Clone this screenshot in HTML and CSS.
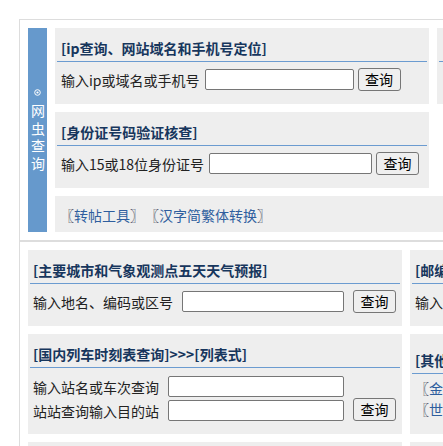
FILE: index.html
```html
<!DOCTYPE html>
<html lang="zh-CN">
<head>
<meta charset="utf-8">
<title>网虫查询</title>
<link rel="stylesheet" href="styles.css">
</head>
<body>
<div class="wrap">
  <section class="box box-top">
    <aside class="side">
      <svg class="ico" width="7" height="7" viewBox="0 0 7 7"><circle cx="3.5" cy="3.5" r="2.8" fill="none" stroke="#fff" stroke-width="1"/><circle cx="3.5" cy="3.5" r="1.1" fill="#fff"/></svg>
      <span class="side-txt">网虫查询</span>
    </aside>
    <div class="grid grid-top">
      <div class="panel">
        <h3 class="ttl">[ip查询、网站域名和手机号定位]</h3>
        <div class="row row-top">
          <label class="lbl">输入ip或域名或手机号</label>
          <input class="inp inp-a" type="text">
          <button class="btn btn-a" type="button">查询</button>
        </div>
      </div>
      <div class="panel">
        <h3 class="ttl ttl-off">[常用网址查询]</h3>
      </div>
      <div class="panel panel-r2">
        <h3 class="ttl">[身份证号码验证核查]</h3>
        <div class="row row-top">
          <label class="lbl">输入15或18位身份证号</label>
          <input class="inp inp-b" type="text">
          <button class="btn btn-a" type="button">查询</button>
        </div>
      </div>
      <div class="panel panel-links">
        <span class="br">〖</span><a class="lnk" href="#">转帖工具</a><span class="br">〗</span><span class="br br-gap">〖</span><a class="lnk" href="#">汉字简繁体转换</a><span class="br">〗</span>
      </div>
    </div>
  </section>
  <section class="box box-bot">
    <div class="grid grid-bot">
      <div class="panel">
        <h3 class="ttl ttl-b">[主要城市和气象观测点五天天气预报]</h3>
        <div class="row row-bot">
          <label class="lbl">输入地名、编码或区号</label>
          <input class="inp inp-c" type="text">
          <button class="btn btn-b" type="button">查询</button>
        </div>
      </div>
      <div class="panel">
        <h3 class="ttl ttl-b">[邮编区号查询]</h3>
        <div class="row row-bot">
          <label class="lbl">输入地名或邮编</label>
        </div>
      </div>
      <div class="panel">
        <h3 class="ttl ttl-b">[国内列车时刻表查询]&gt;&gt;&gt;[列表式]</h3>
        <div class="train">
          <div class="fields">
            <div class="frow"><label class="lbl">输入站名或车次查询</label><input class="inp inp-d" type="text"></div>
            <div class="frow"><label class="lbl">站站查询输入目的站</label><input class="inp inp-d" type="text"></div>
          </div>
          <button class="btn btn-b" type="button">查询</button>
        </div>
      </div>
      <div class="panel panel-other">
        <h3 class="ttl ttl-b">[其他实用查询]</h3>
        <div class="other-links">
          <div class="ol"><span class="br">〖</span><a class="lnk" href="#">金价行情</a><span class="br">〗</span></div>
          <div class="ol"><span class="br">〖</span><a class="lnk" href="#">世界时间</a><span class="br">〗</span></div>
        </div>
      </div>
      <div class="panel"></div>
      <div class="panel"></div>
    </div>
  </section>
</div>
</body>
</html>
```
FILE: styles.css
```css
html, body {
  margin: 0;
  padding: 0;
  overflow: hidden;
  background: #fff;
}
body {
  font-family: "Noto Sans CJK SC", "Noto Sans", sans-serif;
  font-size: 14px;
  color: #222;
}
.wrap {
  margin: 19px 0 0 19px;
  width: 820px;
}
.box {
  border: 1px solid #dddddd;
  padding: 8px;
}
.box-top {
  display: flex;
  gap: 8px;
}
.side {
  width: 19px;
  flex: none;
  background: #6699cc;
  color: #fff;
  display: flex;
  flex-direction: column;
  justify-content: center;
  align-items: center;
  font-size: 14px;
}
.ico {
  display: block;
  margin: 0 0 8px;
}
.side-txt {
  display: block;
  writing-mode: vertical-rl;
  text-orientation: upright;
  letter-spacing: 3.5px;
  line-height: 19px;
  margin-bottom: -3px;
}
.grid {
  display: grid;
  grid-template-columns: 374px 374px;
  gap: 8px;
}
.grid-top {
  grid-template-rows: 76px 76px 36px;
}
.grid-bot {
  grid-template-rows: 76px 100px 76px;
}
.panel {
  background: #eeeeee;
}
.panel-r2 {
  grid-column: 1;
}
.panel-links {
  grid-column: 1 / span 2;
  padding: 3px 0 0 5px;
  line-height: 33px;
  font-size: 14px;
}
.ttl {
  margin: 0 2px;
  padding: 8px 4px 0;
  line-height: 25px;
  font-size: 14px;
  font-weight: bold;
  color: #17365d;
  border-bottom: 1px solid #6b9bd0;
  white-space: nowrap;
}
.ttl-b {
  padding-left: 3px;
}
.row {
  display: flex;
  align-items: center;
  height: 23px;
  padding-top: 6px;
  white-space: nowrap;
}
.row-top {
  padding-left: 6px;
}
.row-bot {
  padding-left: 5px;
}
.lbl {
  color: #222;
  font-size: 14px;
}
.inp {
  box-sizing: border-box;
  height: 21px;
  border: 1px solid #767676;
  border-radius: 2px;
  background: #fff;
  padding: 0 2px;
  margin: 0;
}
.inp-a { width: 149px; margin-left: 5px; }
.inp-b { width: 163px; margin-left: 5px; }
.inp-c { width: 162px; margin-left: 9px; }
.inp-d { width: 176px; margin-left: 9px; }
.btn {
  box-sizing: border-box;
  width: 43px;
  height: 23px;
  padding: 0;
  margin: 0;
  border: 1px solid #767676;
  border-radius: 3px;
  background: #efefef;
  color: #000;
  font-family: "Noto Sans CJK SC", sans-serif;
  font-size: 14px;
  line-height: 21px;
}
.btn-a { margin-left: 4px; }
.btn-b { margin-left: 9px; }
.train {
  display: flex;
  align-items: flex-end;
  padding: 8px 0 0 5px;
}
.fields {
  display: flex;
  flex-direction: column;
  gap: 3px;
}
.frow {
  display: flex;
  align-items: center;
  height: 21px;
  white-space: nowrap;
}
.br {
  color: #1a2440;
}
.br-gap {
  margin-left: 8px;
}
.lnk {
  color: #2f5e9e;
  text-decoration: none;
}
.panel-other {
  padding-top: 6px;
}
.other-links {
  margin-top: 4px;
  padding-left: 5px;
  white-space: nowrap;
}
.ol {
  line-height: 20.5px;
}
```
